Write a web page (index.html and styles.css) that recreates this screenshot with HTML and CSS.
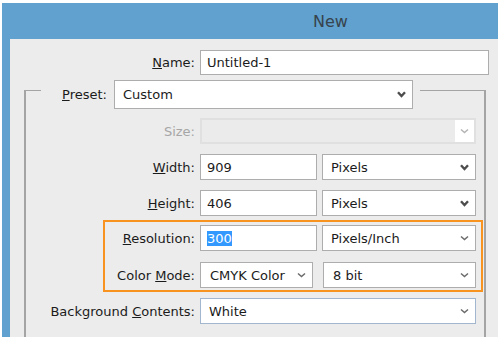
FILE: index.html
```html
<!DOCTYPE html>
<html lang="en">
  <head>
    <meta charset="UTF-8" />
    <title>New</title>
    <link rel="stylesheet" href="styles.css">
  </head>
  <body>
    <div class="window">
      <div class="titlebar"><span class="title">New</span></div>
      <div class="content">
        <div class="row name-row">
          <label class="label"><u>N</u>ame:</label>
          <div class="field name-field">Untitled-1</div>
        </div>

        <div class="group">
          <div class="preset-row">
            <label class="preset-label"><u>P</u>reset:</label>
            <div class="field select preset-field">
              <span>Custom</span>
              <svg class="chev bold" width="9" height="7" viewBox="0 0 9 7"><path d="M1 1.2 L4.5 5 L8 1.2" /></svg>
            </div>
          </div>

          <div class="row size-row">
            <label class="label muted">Size:</label>
            <div class="field disabled wide">
              <span class="drop">
                <svg class="chev thin faded" width="9" height="6" viewBox="0 0 9 6"><path d="M1 1.5 L4.5 4.5 L8 1.5" /></svg>
              </span>
            </div>
          </div>

          <div class="row">
            <label class="label"><u>W</u>idth:</label>
            <div class="field num">909</div>
            <div class="field select unit">
              <span>Pixels</span>
              <svg class="chev bold" width="9" height="7" viewBox="0 0 9 7"><path d="M1 1.2 L4.5 5 L8 1.2" /></svg>
            </div>
          </div>

          <div class="row">
            <label class="label"><u>H</u>eight:</label>
            <div class="field num">406</div>
            <div class="field select unit">
              <span>Pixels</span>
              <svg class="chev bold" width="9" height="7" viewBox="0 0 9 7"><path d="M1 1.2 L4.5 5 L8 1.2" /></svg>
            </div>
          </div>

          <div class="highlight">
            <div class="row">
              <label class="label"><u>R</u>esolution:</label>
              <div class="field num"><span class="selected">300</span></div>
              <div class="field select unit">
                <span>Pixels/Inch</span>
                <svg class="chev thin" width="9" height="6" viewBox="0 0 9 6"><path d="M1 1.5 L4.5 4.5 L8 1.5" /></svg>
              </div>
            </div>
            <div class="row">
              <label class="label">Color <u>M</u>ode:</label>
              <div class="field select mode">
                <span>CMYK Color</span>
                <svg class="chev thin" width="9" height="6" viewBox="0 0 9 6"><path d="M1 1.5 L4.5 4.5 L8 1.5" /></svg>
              </div>
              <div class="field select depth">
                <span>8 bit</span>
                <svg class="chev thin" width="9" height="6" viewBox="0 0 9 6"><path d="M1 1.5 L4.5 4.5 L8 1.5" /></svg>
              </div>
            </div>
          </div>

          <div class="row bg-row">
            <label class="label">Background <u>C</u>ontents:</label>
            <div class="field select wide focus">
              <span>White</span>
              <svg class="chev thin" width="9" height="6" viewBox="0 0 9 6"><path d="M1 1.5 L4.5 4.5 L8 1.5" /></svg>
            </div>
          </div>
        </div>
      </div>
    </div>
  </body>
</html>
```

FILE: styles.css
```css
* {
    box-sizing: border-box;
}

body {
    margin: 0;
    background: #fff;
    font-family: "DejaVu Sans", sans-serif;
    font-size: 13px;
    color: #1b1b1b;
}

.window {
    margin: 3px 0 0 2px;
    width: 496px;
    height: 334px;
    background: #60a1cf;
    display: flex;
    flex-direction: column;
}

.titlebar {
    height: 36px;
    display: flex;
    align-items: center;
    padding-left: 311px;
}

.title {
    font-size: 16px;
    color: #37434d;
}

.content {
    flex: 1;
    margin-left: 8px;
    background: #ececec;
    padding-top: 11px;
    overflow: hidden;
}

.row {
    display: flex;
    align-items: center;
    height: 26px;
}

.label {
    flex: none;
    text-align: right;
    padding-right: 5px;
    white-space: nowrap;
}

.label.muted {
    color: #a6a6a6;
}

.name-row {
    height: 25px;
}

.name-row .label {
    width: 190px;
}

.field {
    flex: none;
    height: 100%;
    border: 1px solid #adadad;
    background: #fff;
    padding: 0 6px;
    display: flex;
    align-items: center;
    justify-content: space-between;
    white-space: nowrap;
}

.field.select {
    padding: 0 6px 0 8px;
}

.name-field {
    width: 289px;
}

/* group box round the image settings */
.group {
    margin: 15px 0 0 14px;
    width: 462px;
    border: 2px solid #a4a4a4;
    border-top: 1px solid #a4a4a4;
    border-bottom: none;
    padding-bottom: 30px;
}

.group .label {
    width: 174px;
}

.preset-row {
    display: flex;
    align-items: center;
    height: 29px;
    width: 379px;
    margin: -11px 0 0 15px;
    padding-left: 21px;
    background: #ececec;
}

.preset-label {
    width: 52px;
    white-space: nowrap;
}

.preset-field {
    width: 299px;
}

.size-row {
    margin-top: 9px;
}

.group > .row + .row {
    margin-top: 10px;
}

.field.disabled {
    border: 2px solid #e0e0e0;
    background: #ebebeb;
    padding: 0;
    justify-content: flex-end;
}

.drop {
    width: 19px;
    height: 100%;
    background: #fff;
    display: flex;
    align-items: center;
    justify-content: center;
}

.wide {
    width: 276px;
}

.num {
    width: 117px;
}

.unit {
    width: 154px;
    margin-left: 5px;
}

.mode {
    width: 113px;
    padding-left: 9px !important;
}

.depth {
    width: 153px;
    margin-left: 10px;
    padding-left: 9px !important;
}

.selected {
    background: #3399ff;
    color: #fff;
    line-height: 15px;
}

.highlight {
    margin: 4px 1px 0 77px;
    border: 2px solid #f7931e;
    padding: 3px 5px 2px 0;
}

.highlight .label {
    width: 95px;
}

.highlight .row + .row {
    margin-top: 11px;
}

.bg-row {
    margin-top: 6px;
}

.field.focus {
    border-color: #a2b6d0;
    padding-left: 8px;
}

.chev {
    flex: none;
    fill: none;
}

.chev.bold path {
    stroke: #4d4d4d;
    stroke-width: 2.4;
}

.chev.thin path {
    stroke: #6b6b6b;
    stroke-width: 1.5;
}

.chev.faded path {
    stroke: #b4b4b4;
}
```
